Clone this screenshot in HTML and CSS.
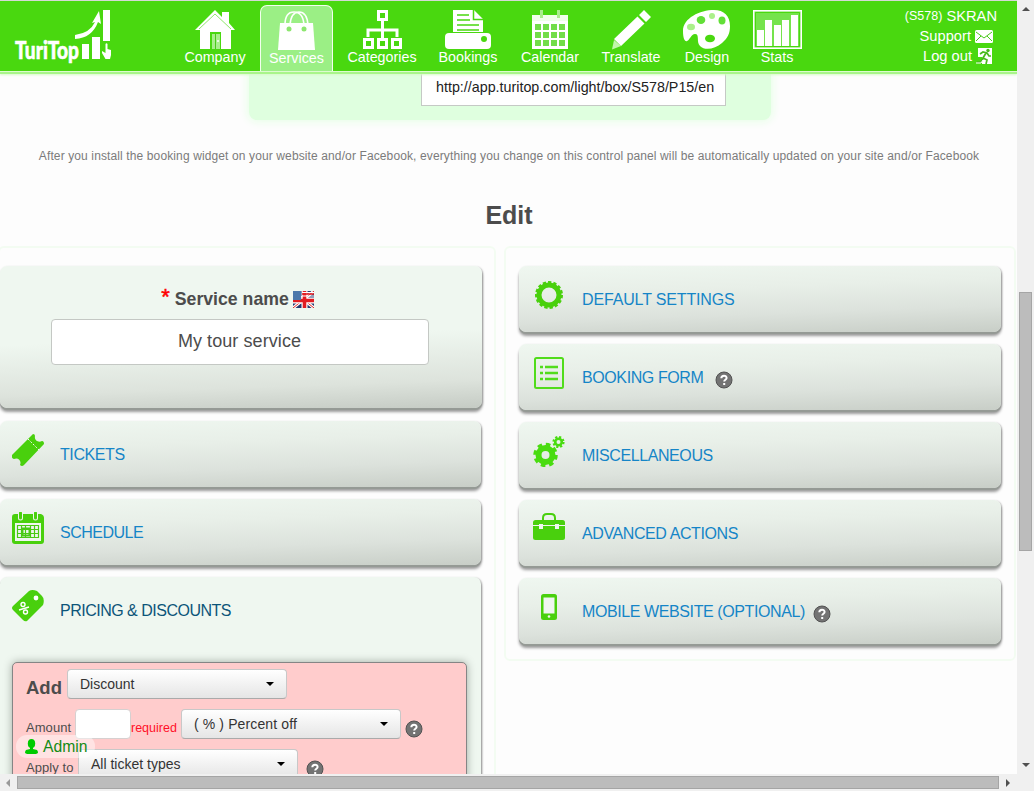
FILE: index.html
```html
<!DOCTYPE html>
<html lang="en">
<head>
<meta charset="utf-8">
<title>TuriTop</title>
<link rel="stylesheet" href="styles.css">
</head>
<body>
<svg class="defs" aria-hidden="true">
  <symbol id="help" viewBox="0 0 18 18"><circle cx="9" cy="9" r="8" fill="#737373" stroke="#525252" stroke-width="1"/><path d="M6.3 7.2C6.4 3.8 11.700 3.900 11.600 7 11.600 8.800 9.200 8.800 9.200 10.600M9.200 12v2.100" fill="none" stroke="#fff" stroke-width="2"/></symbol>
</svg>
<div class="window">
  <div class="page">
    <header class="topbar">
      <svg class="logo" width="100" height="58" viewBox="0 0 100 58">
        <text x="1" y="49" textLength="64" lengthAdjust="spacingAndGlyphs" class="logo-text">TuriTop</text>
        <path d="M68 34h7v15h-7zM78 27h8v22h-8zM89 0h7v31h-7z"/>
        <path d="M61 25Q76 23 81 12L78 13 85 1 87 14 84 12Q78 28 61 29z"/>
        <path d="M91.500 34q1-1.500 2 0v5l3.500 1v5l-1 4h-4.500l-3.500-6v-2l3.500 2z"/>
      </svg>
      <nav class="nav">
        <a class="nav-item"><svg width="40" height="40" viewBox="0 0 40 40"><path d="M20 0 27 7V2h7v11l6 7h-4v19H5V20H0z"/><path d="M4 19 20 4 36 19" fill="none" stroke="#8fe76c"/><path d="M15 22h11v17H15z" class="cut"/><path d="M17 24h8v15h-8z" class="pale"/><path d="M20.500 24v15" class="cut-thin"/><circle cx="23" cy="31" r="1"/></svg><span>Company</span></a>
        <a class="nav-item active"><svg width="40" height="40" viewBox="0 0 40 40"><path d="M3 12h33l2 27H1z"/><path d="M8 14Q8 1 17 1T27 14M13 14Q14 1 22 1T31 14" fill="none" stroke="#fff" stroke-width="1.600"/><circle cx="12" cy="18" r="2.500" fill="#8de66f"/><circle cx="27" cy="18" r="2.500" fill="#8de66f"/></svg><span>Services</span></a>
        <a class="nav-item"><svg width="40" height="40" viewBox="0 0 40 40"><path d="M16.500 1.500h8v8h-8zM2.500 29.500h8v8h-8zM16.500 29.500h8v8h-8zM30.500 29.500h8v8h-8zM20.500 10v19M6 27v-7h29v7" fill="none" stroke="#fff" stroke-width="3"/></svg><span>Categories</span></a>
        <a class="nav-item"><svg width="46" height="40" viewBox="0 0 46 40"><path d="M8 0h20v9h10v13H8zM29 0l9 9h-9z"/><path d="M28.500 0v9.500H38M12 5h12M12 10h13M12 15h22M12 20h22" class="cut-line"/><rect y="23" width="46" height="16" rx="4"/><circle cx="39" cy="29" r="3" class="cut"/></svg><span>Bookings</span></a>
        <a class="nav-item"><svg width="36" height="40" viewBox="0 0 36 40"><path d="M0 5h36v6H0z" fill="#f0feea"/><path d="M8 0h3v8H8zM25 0h3v8h-3z" fill="#a9ed8c"/><path d="M0 11h36v28H0z"/><path d="M3 14h6v6H3zM11 14h6v6h-6zM19 14h6v6h-6zM27 14h6v6h-6zM3 22h6v6H3zM11 22h6v6h-6zM19 22h6v6h-6zM27 22h6v6h-6zM3 30h6v6H3zM11 30h6v6h-6zM19 30h6v6h-6zM27 30h6v6h-6z" fill="#72dd49"/></svg><span>Calendar</span></a>
        <a class="nav-item"><svg width="40" height="40" viewBox="0 0 40 40"><path d="M33 0 40 7 35 12 28 5zM26.500 6.500 33.500 13.500 10 36 3 29z"/><path d="M3 30 10 36 1 39.500z" fill="#c2f6ab"/></svg><span>Translate</span></a>
        <a class="nav-item"><svg width="48" height="40" viewBox="0 0 48 40"><path d="M31 0C17 0 0 8 0 21 0 29 2 32 4 31 7 30 8 24 12 24 17 24 13 32 17 36 22 41 32 39 39 33 45 28 47 23 47 16 47 6 41 0 31 0z"/><g fill="#62df37"><ellipse cx="18" cy="10" rx="4.300" ry="4"/><ellipse cx="39" cy="10.500" rx="3.500" ry="4"/><ellipse cx="27" cy="28.500" rx="5" ry="3.800" class="cut"/></g><g fill="#aaf08a"><ellipse cx="8" cy="17" rx="4" ry="3.200"/><circle cx="29" cy="6" r="3"/></g></svg><span>Design</span></a>
        <a class="nav-item"><svg width="49" height="40" viewBox="0 0 49 40"><path d="M.7.7h47.600v37.600H.7z" fill="#75e34c" stroke="#fff" stroke-width="1.600"/><path d="M2.500 2.500h44v34h-44z" fill="none" stroke="#49d80f"/><path d="M4 20h7v16H4zM12 10h7v26h-7zM21 15h7v21h-7zM29 10h7v26h-7zM38 5h7v31h-7z"/></svg><span>Stats</span></a>
      </nav>
      <div class="account">
        <div class="account-row user"><small>(S578)</small> SKRAN</div>
        <div class="account-row">Support <svg width="18" height="13" viewBox="0 0 18 13"><rect width="18" height="13" rx="1.500"/><path d="M1 2 9 8 17 2M1 11 6 6M17 11 12 6" class="cut-thin"/></svg></div>
        <div class="account-row">Log out <svg width="17" height="17" viewBox="0 0 17 17"><path d="M2 0h14v16H6V9H2z"/><path d="M10 5 7 10l4 2-1 4M7 10l-2 4H1M4 6l3-2 4 1 2 3h2" fill="none" stroke="#49b91c" stroke-width="1.700"/><circle cx="12" cy="2.500" r="1.700" fill="#49b91c"/><path d="M0 15h5l2-3" fill="none" stroke="#fff"/></svg></div>
      </div>
    </header>

    <section class="widget"><div class="url">http://app.turitop.com/light/box/S578/P15/en</div></section>
    <p class="note">After you install the booking widget on your website and/or Facebook, everything you change on this control panel will be automatically updated on your site and/or Facebook</p>
    <h1 class="title">Edit</h1>

    <main class="columns">
      <section class="column left">
        <div class="card service">
          <div class="service-label"><b class="star">*</b><b>Service name</b>
            <svg width="21" height="17" viewBox="0 0 21 17"><path fill="#26386f" d="M0 0h21v17H0z"/><path d="M0 0 21 17M21 0 0 17" stroke="#fff" stroke-width="3"/><path d="M0 0 21 17M21 0 0 17" stroke="#d22" stroke-width="1"/><path d="M11.500 0v17M0 9.500h21" stroke="#fff" stroke-width="6"/><path d="M11.500 0v17M0 9.500h21" stroke="#e11c22" stroke-width="3.600"/><path fill="#4b78ab" d="M0 0h8v9H0z"/><path d="M9 1.500h12M9 5h12" stroke="#fff"/><path d="M9 3h12" stroke="#e11c22" stroke-width="1.500"/></svg>
          </div>
          <div class="service-input">My tour service</div>
        </div>
        <a class="card row"><span class="icon"><svg width="32" height="32" viewBox="0 0 32 32"><path d="M21 0q2 0 2 2c-1 4 3 7 7 5q2 0 2 3L12 31q-2 2-4 0c2-4-2-8-6-6q-3-1-2-4z"/><path d="M16 5 27 16" stroke="#eff6f0" stroke-dasharray="2 1.500"/></svg></span><span class="caption">TICKETS</span></a>
        <a class="card row"><span class="icon"><svg width="32" height="32" viewBox="0 0 32 32"><path d="M3 2h26q3 1 3 4v23q0 3-3 3H3q-3 0-3-3V5q0-3 3-3z"/><path d="M8.500 1v5M23.500 1v5" stroke="#eff6f0" stroke-width="5" stroke-linecap="round"/><path d="M8.500 1v5M23.500 1v5" stroke="#49d00d" stroke-width="3" stroke-linecap="round"/><path fill="#eff6f0" d="M3 11h26v18H3z"/><path d="M5.500 13.500h21v12h-21zM5 17.500h22M5 21.500h22M9.500 13v13M13.500 13v13M18.500 13v13M22.500 13v13" fill="none" stroke="#49c915" stroke-width="1.200"/><path d="M10.500 16.500h7v7h-7z" fill="none" stroke="#49c915" stroke-width="2"/></svg></span><span class="caption schedule">SCHEDULE</span></a>
        <div class="card pricing">
          <a class="row"><span class="icon"><svg width="32" height="32" viewBox="0 0 32 32"><path d="M1 16 17 1Q20-1 25 1l5 5q3 3 1 9L15 31q-2 1-4-1L1 20q-2-2 0-4z"/><circle cx="24" cy="8" r="2.400" fill="#fff"/><path d="M7 20 17 17" stroke="#fff" stroke-width="1.400"/><circle cx="11" cy="14.500" r="2" fill="none" stroke="#fff" stroke-width="1.400"/><circle cx="13.500" cy="22" r="2" fill="none" stroke="#fff" stroke-width="1.400"/></svg></span><span class="caption dark">PRICING &amp; DISCOUNTS</span></a>
          <div class="discount">
            <div class="form-row"><b class="add">Add</b><div class="select wide">Discount<i></i></div></div>
            <div class="form-row"><span class="lbl amount">Amount</span><div class="amount-box"></div><span class="required">required</span><div class="select percent">( % ) Percent off<i></i></div><svg class="help"><use href="#help"/></svg></div>
            <div class="form-row"><span class="lbl apply">Apply to</span><div class="select ticket">All ticket types<i></i></div><svg class="help far"><use href="#help"/></svg></div>
          </div>
        </div>
      </section>

      <section class="column right">
        <a class="card row"><span class="icon"><svg width="32" height="32" viewBox="0 0 32 32"><circle cx="16" cy="16" r="10" fill="none" stroke="#49d00d" stroke-width="5"/><circle cx="16" cy="16" r="12.500" fill="none" stroke="#49d00d" stroke-width="3" stroke-dasharray="3.200 2.036"/></svg></span><span class="caption default">DEFAULT SETTINGS</span></a>
        <a class="card row"><span class="icon"><svg width="32" height="32" viewBox="0 0 32 32"><rect x="2" y="1" width="28" height="30" rx="1.500" fill="none" stroke="#51dc1b" stroke-width="2"/><path d="M7 10h3m2 0h13M7 16h3m2 0h13M7 22h3m2 0h13" stroke="#51dc1b" stroke-width="2.400"/></svg></span><span class="caption">BOOKING FORM</span><svg class="help form-help"><use href="#help"/></svg></a>
        <a class="card row"><span class="icon"><svg width="32" height="32" viewBox="0 0 32 32"><g fill="none" stroke="#49dc10"><circle cx="12.500" cy="20" r="7" stroke-width="6"/><circle cx="12.500" cy="20" r="10.500" stroke-width="3.500" stroke-dasharray="4.500 3.747"/><circle cx="25.500" cy="7" r="3.300" stroke-width="2.600"/><circle cx="25.500" cy="7" r="5" stroke-width="2.200" stroke-dasharray="2.100 1.827"/></g></svg></span><span class="caption">MISCELLANEOUS</span></a>
        <a class="card row"><span class="icon"><svg width="32" height="32" viewBox="0 0 32 32"><path d="M10 7V5Q10 1 14 1h4q4 0 4 4v2" fill="none" stroke="#49d00d" stroke-width="2"/><rect y="7" width="32" height="20" rx="2.500"/><path d="M0 12.500h32" stroke="#eff6f0"/><path fill="#eff6f0" d="M6 11h4v5H6zM22 11h4v5h-4z"/></svg></span><span class="caption">ADVANCED ACTIONS</span></a>
        <a class="card row"><span class="icon"><svg width="32" height="32" viewBox="0 0 32 32"><rect x="8" y="3" width="16" height="26" rx="2.500"/><path fill="#eff6f0" d="M10.500 6.500h11v16h-11z"/><circle cx="16" cy="25.500" r="1.300" fill="#eff6f0"/></svg></span><span class="caption">MOBILE WEBSITE (OPTIONAL)</span><svg class="help"><use href="#help"/></svg></a>
      </section>
    </main>

    <div class="admin"><svg width="13" height="15" viewBox="0 0 13 15"><ellipse cx="6.500" cy="4.500" rx="3.700" ry="4.500"/><path d="M5 8h3v2l4 1q1 1 1 3l-2 1H2l-2-1q0-2 1-3l4-1z"/></svg>Admin</div>
  </div>
  <div class="scroll vertical"><i class="arrow up"></i><b></b><i class="arrow down"></i></div>
  <div class="scroll horizontal"><i class="arrow prev"></i><b></b><i class="arrow next"></i></div>
  <div class="corner"></div>
</div>
</body>
</html>
```
FILE: styles.css
```css
* { box-sizing: border-box; }
body { margin: 0; font-family: "Liberation Sans", Arial, sans-serif; color: #4c4c4c; overflow: hidden; }
.defs { position: absolute; width: 0; height: 0; }
svg { flex: none; }
.window { width: 1034px; height: 791px; display: grid; grid-template: 774px 17px / 1017px 17px; }
.page { position: relative; overflow: hidden; background: #fdfdfd; display: flex; flex-direction: column; }

.topbar { position: relative; z-index: 2; height: 71px; flex: none; display: flex; background: #49d80f; border-top: 1px solid #d5d9d5; box-shadow: 0 1px 0 #dcfbcf, 0 3px 0 #a9f58a, 0 4px 2px #d6fbc8; color: #fff; fill: #fff; }
.logo { margin: 9px 56px 0 14px; }
.logo-text { font: 900 25px Lato, sans-serif; fill: #fff; stroke: #fff; stroke-width: .6px; }
.nav { display: grid; grid-template-columns: 90px 73px 98px 74px 90px 72px 80px 60px; }
.nav-item { display: flex; flex-direction: column; align-items: center; padding-top: 9px; font-size: 14.300px; line-height: 16px; }
.nav-item svg { display: block; height: 40px; }
.nav-item span { margin-top: -1px; }
.nav-item.active { margin-top: 4px; padding-top: 5px; border: 1px solid #f2ffed; border-bottom: 0; border-radius: 7px 7px 0 0; background: #9bef85; }
.cut { fill: #49d80f; }
.pale { fill: #a9ee8c; }
.cut-line { fill: none; stroke: #49d80f; stroke-width: 1.500; }
.cut-thin { fill: none; stroke: #49c91a; stroke-width: 1; }
.account { margin: 5px 0 0 auto; padding-right: 24px; font-size: 14.700px; line-height: 20px; }
.account-row { display: flex; justify-content: flex-end; align-items: center; gap: 4px; height: 20px; }
.user { margin-right: -4px; }
.user small { font-size: 12.500px; }

.widget { width: 522px; height: 49px; margin-left: 249px; padding-left: 172px; flex: none; background: #dfffdf; border-radius: 0 0 8px 8px; box-shadow: 0 0 8px 2px #e8ffe8; }
.url { width: 305px; height: 35px; padding: 7px 0 0 14px; background: #fff; border: 1px solid #c5c9c5; border-top: 0; color: #222; font-size: 14.300px; line-height: 18px; white-space: nowrap; }
.note { margin: 27px 0 0; padding-left: 1px; font-size: 12px; letter-spacing: .119px; line-height: 18px; color: #7b7b7b; text-align: center; white-space: nowrap; }
.title { margin: 35px 0 0; padding-left: 1px; font-size: 25px; line-height: 30px; text-align: center; color: #4c4c4c; }

.columns { display: flex; gap: 10px; margin-top: 16px; align-items: flex-start; }
.column { border: 2px solid #f3fcf2; border-radius: 6px; display: flex; flex-direction: column; gap: 12px; }
.left { flex: none; width: 498px; margin-left: -2px; padding: 18px 12px 20px 0; }
.right { flex: none; width: 512px; margin-left: -2px; padding: 18px 13px 15px 13px; }
.card { border-radius: 7px; background: linear-gradient(178deg, #c8cec7 0, #dce2dc 32%, #e8efe8 65%, #eff7f0 100%); background: linear-gradient(178deg, #eff7f0 0, #e8efe8 35%, #dce2dc 68%, #c8cec7 100%); box-shadow: 0 2px 0 #959a95, 0 4px 3px #9a9a9a, 1px 1px 2px #999; }
.row { display: flex; height: 66px; flex: none; }
.left .card { margin-right: 1px; }
.icon { width: 32px; height: 32px; margin: 13px 16px 0 12px; fill: #49d00d; }
.right .icon { margin: 13px 17px 0 14px; }
.caption { padding-top: 24px; font-size: 16px; line-height: 20px; letter-spacing: -0.400px; color: #1585c7; white-space: nowrap; }
.caption.default { letter-spacing: -.150px; }
.caption.schedule, .caption.dark { letter-spacing: -.500px; }
.caption.dark { color: #0c5579; }
.help { width: 18px; height: 18px; align-self: flex-start; }
.row .help { margin: 27px 0 0 8px; }
.row .form-help { margin-left: 12px; }

.left .service { height: 142px; margin: 0 0 1px; padding-top: 20px; background: linear-gradient(178deg, #eff7f0 50%, #dde3dc 82%, #c5cbc4); display: flex; flex-direction: column; align-items: center; }
.service-label { display: flex; align-items: center; height: 26px; font-size: 17.700px; padding-right: 7px; }
.service-label svg { margin-left: 4px; }
.star { color: red; font-size: 22px; font-weight: 400; margin: -5px 5px 0 0; -webkit-text-stroke: .500px red; }
.service-input { width: 378px; height: 46px; margin-top: 7px; padding-top: 11px; margin-right: 3px; border: 1px solid #c4c8c4; border-radius: 4px; background: #fff; font-size: 18px; letter-spacing: .08px; line-height: 21px; text-align: center; }
.left .pricing { height: 280px; background: #eff7f0; }
.discount { width: 455px; height: 200px; margin: 19px 0 0 12px; padding: 6px 0 0 13px; border: 1px solid #858585; border-radius: 5px; background: #ffcccc; box-shadow: 0 0 9px #a1aaa1; }
.form-row { display: flex; height: 40px; font-size: 14px; }
.add { width: 41px; padding-top: 8px; font-size: 18.500px; line-height: 22px; }
.select { width: 220px; height: 30px; padding: 0 12px; display: flex; align-items: center; justify-content: space-between; border: 1px solid #c8c8c8; border-bottom-color: #aaa; border-radius: 4px; background: linear-gradient(#fff, #e5e5e5); color: #333; font-size: 14px; }
.select i { border: 4px solid transparent; border-top-color: #000; border-bottom: 0; }
.select.ticket { width: 220px; }
.select.percent { letter-spacing: .12px; }
.lbl { padding-top: 10px; font-size: 13px; line-height: 18px; letter-spacing: .06px; }
.amount { width: 49px; }
.apply { width: 52px; }
.amount-box { width: 56px; height: 30px; background: #fff; border: 1px solid #d6d0d0; border-radius: 4px; }
.required { width: 50px; padding-top: 10px; font-size: 12.500px; line-height: 18px; color: #ff1028; }
.form-row .help { margin: 11px 0 0 4px; }
.form-row .far { margin-left: 8px; }

.admin { position: absolute; left: 16px; top: 735px; width: 79px; height: 23px; padding-left: 9px; display: flex; align-items: center; gap: 5px; border-radius: 11px; background: rgba(255,255,255,.45); color: #148b14; fill: #00cb00; font-size: 15.700px; }

.scroll, .corner { background: #f0f0f0; }
.scroll { display: flex; align-items: center; }
.scroll b { background: #bcbcbc; border: 1px solid #a5a5a5; }
.vertical { flex-direction: column; grid-column: 2; grid-row: 1; }
.vertical b { width: 13px; height: 259px; margin: 281px 0 212px; }
.horizontal b { width: 982px; height: 13px; margin: 0 7px; }
.arrow { flex: none; border: 4px solid transparent; }
.up { margin-top: 7px; border-bottom-color: #505050; border-top: 0; }
.down { border-top-color: #505050; border-bottom: 0; }
.prev { margin-left: 6px; border-right-color: #999; border-left: 0; }
.next { border-left-color: #505050; border-right: 0; }
```
